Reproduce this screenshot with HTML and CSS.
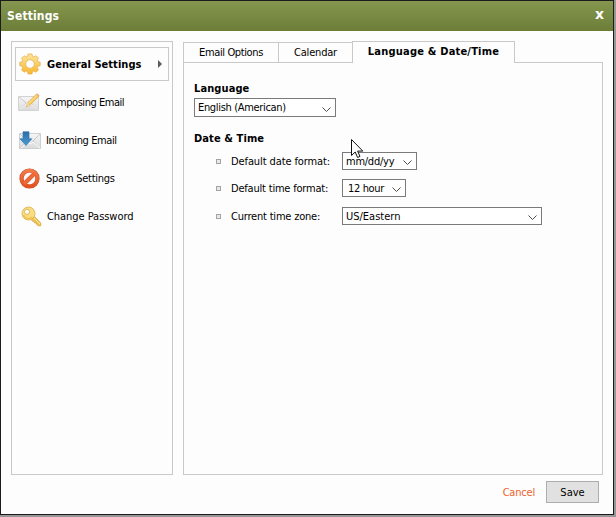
FILE: index.html
```html
<!DOCTYPE html>
<html lang="en">
<head>
<meta charset="utf-8">
<title>Settings</title>
<link rel="stylesheet" href="styles.css">
</head>
<body>
<section class="dialog">
  <header class="titlebar"><span class="title">Settings</span><span class="close">x</span></header>
  <div class="content">
    <nav class="sidebar">
      <a class="item active">
        <svg class="icon" width="22" height="22" viewBox="0 0 22 22"><defs><linearGradient id="gold" x2="0" y2="1"><stop stop-color="#fce6a0"/><stop offset="1" stop-color="#f8b62d"/></linearGradient></defs><g fill="url(#gold)" stroke="#e7b24b" stroke-width=".8"><path d="M9 1h4l.5 2.4 1.5.6 2-1.3 2.5 2.5L18.300 7.200l.6 1.500 2.300.500v3.500l-2.300.500-.6 1.600 1.200 2-2.500 2.500-2-1.300-1.500.6L13 21H9l-.5-2.400-1.500-.6-2 1.300-2.500-2.500 1.200-2-.6-1.600L.8 12.700V9.200l2.300-.5.6-1.500-1.200-2L5 2.700 7 4l1.500-.6z"/></g><circle cx="11" cy="11" r="4.300" fill="#fdfdfd" stroke="#e9be66"/></svg>
        <span class="label general">General Settings</span><span class="arrow"></span>
      </a>
      <a class="item composing">
        <svg class="icon" width="22" height="19" viewBox="0 0 22 19"><defs><linearGradient id="paper" x2="0" y2="1"><stop stop-color="#f7f7f7"/><stop offset="1" stop-color="#dadada"/></linearGradient></defs><path d="M.5 3.500h20v14H.5z" fill="url(#paper)" stroke="#d2d2d2"/><path d="M1 17l7-7M20 17l-7-7M1 4l9.500 8L20 4" fill="none" stroke="#c9c9c9"/><path d="M1.500 16.500l7-6 2 1.500 2-1.500 7 6" fill="none" stroke="#fff" stroke-width=".7"/><path d="M8 14l1.500-4 9-9 2.500 2.200-9 9z" fill="#f5ca5c" stroke="#e0a54a" stroke-width=".6"/><path d="M8 14l1.500-4 2.500 2.200z" fill="#eed4ac"/><path d="M18 1.500l2.500 2.300 1-1.300L19.500.5z" fill="#eaaa7b"/><path d="M10.500 10.800L18.800 2.500" stroke="#ffe79b"/></svg>
        <span class="label">Composing Email</span>
      </a>
      <a class="item incoming">
        <svg class="icon" width="22" height="19" viewBox="0 0 22 19"><path d="M.5 2.500h21v15H.5z" fill="url(#paper)" stroke="#cbd0d5"/><path d="M1 17l8-7M21 17l-7-7M1 3l10 10L21 3" fill="none" stroke="#c5c9ce"/><path d="M2 17l7-6 2 2 3-2 7 6" fill="none" stroke="#fff"/><defs><linearGradient id="blue" x2="0" y2="1"><stop stop-color="#2b6ba5"/><stop offset="1" stop-color="#4b9dd4"/></linearGradient></defs><path d="M4 .8h6v7h2.800L7 14.500 1 7.800h3z" fill="url(#blue)" stroke="#3477ae" stroke-width=".7"/></svg>
        <span class="label">Incoming Email</span>
      </a>
      <a class="item spam">
        <svg class="icon" width="21" height="21" viewBox="0 0 21 21"><defs><linearGradient id="red" x2="0" y2="1"><stop stop-color="#f37a49"/><stop offset="1" stop-color="#e4521f"/></linearGradient></defs><circle cx="10.500" cy="10.500" r="8" fill="#f7f7f7" stroke="#c84c24" stroke-width="4.200"/><path d="M5 16L16 5" stroke="#d95428" stroke-width="4"/><circle cx="10.500" cy="10.500" r="8" fill="none" stroke="url(#red)" stroke-width="3.300"/><path d="M5 16L16 5" stroke="#ef6837" stroke-width="3"/></svg>
        <span class="label">Spam Settings</span>
      </a>
      <a class="item password">
        <svg class="icon" width="21" height="21" viewBox="0 0 21 21"><path d="M9.500 12.500l3-3 7.300 7.600v2.700h-2.600l-1.500-1.300-.2-1.500-1.800.1-.3-1.800-1.700.1z" fill="#eec653" stroke="#d4a445" stroke-width=".8"/><path d="M13 12l6 6" stroke="#ffeaa1"/><circle cx="7.500" cy="7.500" r="6.500" fill="#f9dd80" stroke="#ddb456" stroke-width=".9"/><path d="M2.500 9a5 5 0 0 0 8.500 2" fill="none" stroke="#efc454" stroke-width="1.500"/><circle cx="6" cy="5.800" r="2.500" fill="#fff" stroke="#dcb761"/></svg>
        <span class="label">Change Password</span>
      </a>
    </nav>
    <main class="main">
      <div class="tabs"><span class="tab options"><span>Email Options</span></span><span class="tab calendar"><span>Calendar</span></span><span class="tab current"><span>Language &amp; Date/Time</span></span><span class="rest"></span></div>
      <div class="panel">
        <h2 class="h-lang">Language</h2>
        <div class="select language"><span>English (American)</span><svg class="chevron" width="9" height="6" viewBox="0 0 9 6"><path d="M.5.500l4 4 4-4"/></svg></div>
        <h2 class="h-date">Date &amp; Time</h2>
        <div class="row"><i class="bullet"></i><span class="caption date-label">Default date format:</span><div class="select date"><span>mm/dd/yy</span><svg class="chevron" width="9" height="6" viewBox="0 0 9 6"><path d="M.5.500l4 4 4-4"/></svg></div></div>
        <div class="row"><i class="bullet"></i><span class="caption">Default time format:</span><div class="select time"><span>12 hour</span><svg class="chevron" width="9" height="6" viewBox="0 0 9 6"><path d="M.5.500l4 4 4-4"/></svg></div></div>
        <div class="row zone-row"><i class="bullet"></i><span class="caption">Current time zone:</span><div class="select zone"><span>US/Eastern</span><svg class="chevron" width="9" height="6" viewBox="0 0 9 6"><path d="M.5.500l4 4 4-4"/></svg></div></div>
      </div>
    </main>
  </div>
  <footer class="actions"><a class="cancel">Cancel</a><button class="save">Save</button></footer>
</section>
<svg class="cursor" width="13" height="20" viewBox="0 0 13 20"><path d="M.5.500v16l3.700-3.500 2.400 5.500 2.400-1.100-2.400-5.300h5.200z" fill="#fff" stroke="#111"/></svg>
</body>
</html>
```
FILE: styles.css
```css
* { box-sizing: border-box; }
body { margin: 0; width: 616px; height: 517px; overflow: hidden; background: #979797; font: 11px/15px "DejaVu Sans Condensed", "DejaVu Sans", sans-serif; font-stretch: condensed; color: #000; }
.dialog { width: 614px; height: 515px; border: 1px solid #1c1c1c; background: #fdfdfd; }
.titlebar { height: 30px; display: flex; justify-content: space-between; align-items: center; padding: 0 9px 0 6px; background: linear-gradient(#85974e, #6c7d38); color: #fff; font-weight: bold; }
.title { font-size: 12px; letter-spacing: .15px; }
.close { font: bold 14px/20px "DejaVu Sans", sans-serif; margin-top: -4px; }
.content { display: flex; gap: 10px; height: 444px; padding: 10px 10px 0; }
.sidebar { width: 162px; height: 434px; border: 1px solid #c9c9c9; padding: 5px 3px; }
.item { display: flex; align-items: center; height: 38px; padding-left: 4px; white-space: nowrap; }
.icon { flex: none; }
.label { margin-left: 5px; letter-spacing: -.4px; }
.item.active { height: 34px; border: 1px solid #c9c9c9; padding-left: 3px; margin-bottom: 2px; }
.active .label { font-weight: bold; margin-left: 6px; letter-spacing: .05px; }
.arrow { margin: 0 6px 0 auto; border-left: 4px solid #5b5b5b; border-top: 4px solid transparent; border-bottom: 4px solid transparent; }
.composing { padding-left: 3px; }
.composing .label { letter-spacing: -.46px; }
.spam .label { margin-left: 6px; letter-spacing: -.25px; }
.password { padding-left: 6px; }
.password .label { letter-spacing: -.05px; }
.main { width: 420px; height: 434px; }
.tabs { display: flex; align-items: flex-end; height: 22px; }
.tab { height: 21px; border: 1px solid #c9c9c9; border-right: 0; text-align: center; line-height: 20px; white-space: nowrap; }
.options { width: 95px; letter-spacing: -.38px; }
.calendar { width: 74px; letter-spacing: -.2px; }
.current { width: 163px; height: 22px; border-right: 1px solid #c9c9c9; border-bottom: 0; font-weight: bold; line-height: 20px; letter-spacing: .2px; }
.rest { flex: 1; height: 1px; background: #c9c9c9; }
.panel { height: 412px; border: 1px solid #c9c9c9; border-top: 0; padding: 18px 10px; }
h2 { font-size: 11px; line-height: 15px; margin: 0; letter-spacing: .1px; }
.h-lang { margin-bottom: 2px; }
.h-date { margin: 14px 0 6px; }
.select { display: flex; align-items: center; justify-content: space-between; height: 18px; border: 1px solid #7a7a7a; background: #fff; padding: 0 4px 0 3px; white-space: nowrap; }
.select.language { width: 142px; height: 19px; letter-spacing: -.33px; }
.date { width: 75px; letter-spacing: -.25px; }
.time { width: 64px; padding-left: 5px; letter-spacing: -.35px; }
.zone { width: 200px; }
.chevron { fill: none; stroke: #4d4d4d; margin-top: 4px; }
.row { display: flex; align-items: center; height: 18px; margin-bottom: 9px; padding-left: 22px; }
.row + .zone-row { margin-top: 10px; }
.bullet { width: 5px; height: 5px; border: 1px solid #a3a3a3; background: #e9e9e9; margin-right: 10px; }
.caption { width: 111px; white-space: nowrap; letter-spacing: -.2px; }
.date-label { letter-spacing: -.1px; }
.actions { display: flex; justify-content: flex-end; align-items: center; height: 32px; margin-top: 1px; padding-right: 14px; gap: 11px; }
.cancel { color: #ed622d; letter-spacing: -.2px; }
.save { width: 53px; height: 22px; border: 1px solid #adadad; background: #e1e1e1; padding: 0; font: inherit; color: #000; }
.cursor { position: absolute; left: 351px; top: 139px; }
```
